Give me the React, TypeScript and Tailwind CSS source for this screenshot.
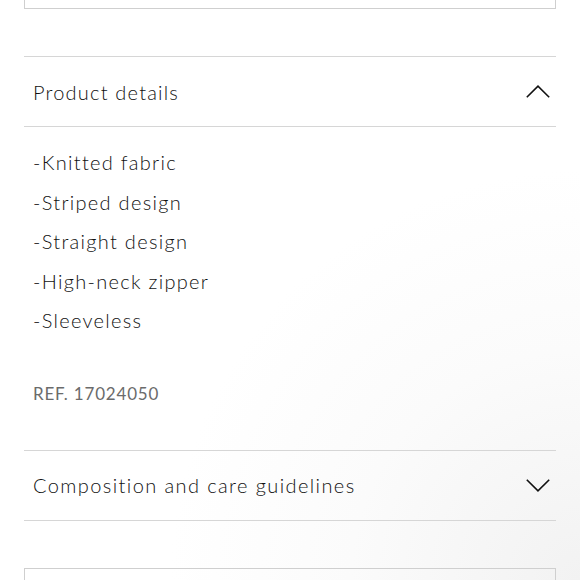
const items = ['-Knitted fabric', '-Striped design', '-Straight design', '-High-neck zipper', '-Sleeveless']

function Chevron({ up }: { up?: boolean }) {
  return (
    <svg width="24" height="13" viewBox="0 0 24 13" fill="none" className="text-[#111]">
      {up ? (
        <path d="M0.8 12.2 L12 1.2 L23.2 12.2" stroke="currentColor" strokeWidth="1.6" />
      ) : (
        <path d="M0.8 0.8 L12 11.8 L23.2 0.8" stroke="currentColor" strokeWidth="1.6" />
      )}
    </svg>
  )
}

export default function App() {
  return (
    <div className="w-[580px] h-[580px] overflow-hidden bg-[radial-gradient(ellipse_at_100%_100%,#f2f2f2_0%,#fbfbfb_28%,#ffffff_50%)] font-['Lato',sans-serif] text-[#111]">
      {/* previous block */}
      <div className="mx-6 h-[9px] border border-t-0 border-[#cfcfcf]" />

      <div className="mx-6 mt-[47px] border-t border-[#d6d6d6]">
        <div className="h-[69px] flex items-center justify-between pl-[9px] pr-[6px]">
          <span className="text-[20px] font-light tracking-[1.2px]">Product details</span>
          <Chevron up />
        </div>
        <div className="border-t border-[#d6d6d6] pl-[9px] pt-[16px] pb-[46px]">
          <ul>
            {items.map((t) => (
              <li key={t} className="text-[20px] font-light leading-[39.5px] tracking-[1.3px]">
                {t}
              </li>
            ))}
          </ul>
          <p className="mt-[43px] text-[17px] leading-[20px] font-normal tracking-[0.8px] text-[#6b6b6b]">
            REF. 17024050
          </p>
        </div>
        <div className="border-t border-[#d6d6d6] h-[70px] flex items-center justify-between pl-[9px] pr-[6px]">
          <span className="text-[20px] font-light tracking-[1.4px]">Composition and care guidelines</span>
          <Chevron />
        </div>
        <div className="border-t border-[#d6d6d6]" />
      </div>

      <div className="mx-6 mt-[47px] h-[40px] border border-b-0 border-[#cfcfcf]" />
    </div>
  )
}
